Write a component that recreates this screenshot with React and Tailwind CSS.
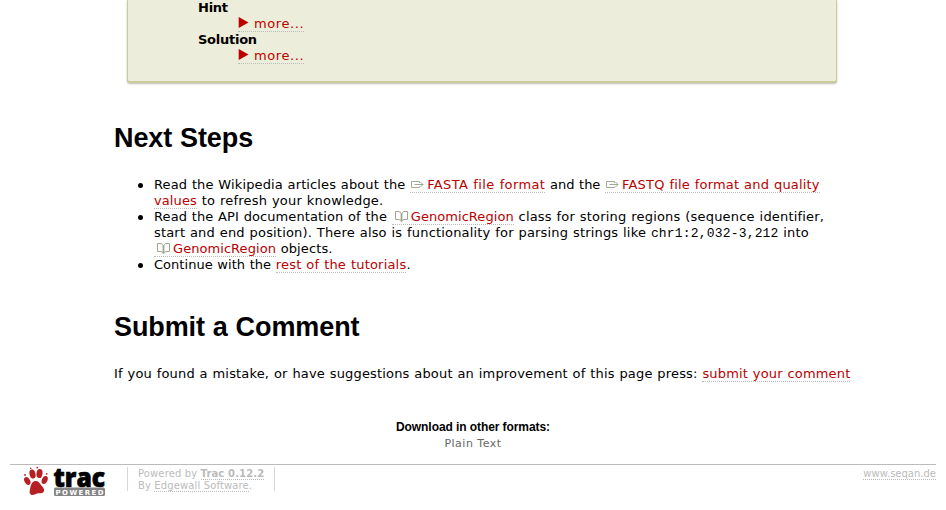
import React from "react";

const link = "text-[#bb0000] border-b border-dotted border-[#bbbbbb]";

function ExternalIcon() {
  return (
    <svg className="mr-[3px] ml-[1px] inline-block h-[10px] w-[13px] align-[-1px]" viewBox="0 0 13 10" fill="none" stroke="#a0aa93" strokeWidth="1">
      <path d="M8.500 3V1.500H.5v6h8V6.500M3.500 4.500H12M9.500 2l2.500 2.500L9.500 7" />
    </svg>
  );
}

function BookIcon() {
  return (
    <svg className="mr-[3px] ml-[3px] inline-block h-[11px] w-[13px] align-[-1px]" viewBox="0 0 13 11" fill="none" stroke="#a3a58d" strokeWidth="1">
      <path d="M6.500 3C6 1.200 4.500.5 3 .5H.5v8H3C4.500 8.500 6 9 6.500 10.500M6.500 3C7 1.200 8.500.5 10 .5h2.500v8H10C8.500 8.500 7 9 6.500 10.500" />
      <path d="M6.500 2.500v8" strokeWidth="1.800" />
    </svg>
  );
}

function More() {
  return (
    <div className="ml-10 h-4 whitespace-nowrap">
      <a className={link + " tracking-[0.6px]"}>
        <svg className="mr-[5px] inline-block h-[11px] w-[11px] align-[0px]" viewBox="0 0 11 11">
          <path d="M.7 0L10.500 5.500.7 11z" fill="#bb0000" />
        </svg>
        more...
      </a>
    </div>
  );
}

function Bullet({ children }) {
  return (
    <li className="flex">
      <span className="mt-[6px] mr-[10px] h-[5px] w-[5px] shrink-0 rounded-full bg-black" />
      <div>{children}</div>
    </li>
  );
}

function TracLogo() {
  return (
    <svg className="h-[32px] w-[84px] overflow-visible" viewBox="0 0 84 32">
      <g fill="#b42024">
        <ellipse cx="8.500" cy="7" rx="3" ry="4.600" transform="rotate(-12 8.500 7)" />
        <ellipse cx="15.500" cy="6.500" rx="3" ry="4.600" transform="rotate(8 15.500 6.500)" />
        <ellipse cx="3.300" cy="14" rx="2.800" ry="4.200" transform="rotate(-28 3.300 14)" />
        <ellipse cx="20.700" cy="13" rx="2.800" ry="4.200" transform="rotate(22 20.700 13)" />
        <path d="M11.500 14c3 0 4 2 5.500 4 1.800 2.200 3.600 3.500 3 6-.6 2.700-3.500 2-6 2.300-2.500.3-4.300 2.500-6.800 1.500-2.300-1-1.500-3.800-1-6.300.5-3 1.800-7.500 5.300-7.500z" />
        <circle cx="6.700" cy="1.200" r=".8" /><circle cx="13.300" cy=".6" r=".9" /><circle cx="1" cy="8" r=".9" /><circle cx="22.700" cy="6.800" r=".9" />
      </g>
      <text x="29.500" y="20" fontFamily="Open Sans, sans-serif" fontWeight="800" fontSize="26" textLength="51.500" lengthAdjust="spacingAndGlyphs" fill="#000" stroke="#000" strokeWidth=".7">trac</text>
      <rect x="30" y="20.500" width="51" height="8.500" rx="1.500" fill="#858585" />
      <text x="31.500" y="27.500" fontFamily="DejaVu Sans, sans-serif" fontWeight="700" fontSize="7" textLength="48" fill="#fff">POWERED</text>
    </svg>
  );
}

export default function App() {
  return (
    <div className="h-[510px] w-[946px] overflow-hidden bg-white font-['DejaVu_Sans',sans-serif] text-[13px] leading-4 text-black">
      <div className="ml-[127px] h-[83px] w-[710px] rounded-b-[3px] border-x border-b-2 border-[#cccc99] bg-[#ededdb] pl-[70px] shadow-[0_1px_2px_#bbbbbb]">
        <div className="h-4 text-[13px] font-bold tracking-[-0.25px]">Hint</div>
        <More />
        <div className="h-4 text-[13px] font-bold tracking-[-0.25px]">Solution</div>
        <More />
      </div>

      <div className="pl-[114px] whitespace-nowrap [word-spacing:0.5px]">
        <h1 className="mt-[39px] h-8 font-['Liberation_Sans',sans-serif] text-[27px] leading-8 font-bold tracking-[-0.1px]">Next Steps</h1>
        <ul className="mt-[23px] ml-[24px]">
          <Bullet>
            <div className="ml-px h-4"><span className="tracking-[0.12px]">Read the Wikipedia articles about the </span><a className={link + " tracking-[0.38px]"}><ExternalIcon />FASTA file format</a> and the <a className={link + " tracking-[0.19px]"}><ExternalIcon />FASTQ file format and quality</a></div>
            <div className="ml-px h-4"><a className={link + " tracking-[0.1px]"}>values</a><span className="tracking-[0.2px]"> to refresh your knowledge.</span></div>
          </Bullet>
          <Bullet>
            <div className="ml-px h-4"><span className="tracking-[0.09px]">Read the API documentation of the </span><a className={link + " tracking-[0.06px]"}><BookIcon />GenomicRegion</a><span className="tracking-[0.19px]"> class for storing regions (sequence identifier,</span></div>
            <div className="ml-px h-4"><span className="tracking-[0.175px]">start and end position). There also is functionality for parsing strings like </span><code className="font-['Liberation_Mono',monospace] text-[13px] tracking-[0.18px]">chr1:2,032-3,212</code><span className="tracking-[0.15px]"> into</span></div>
            <div className="ml-px h-4"><a className={link + " tracking-[0.06px]"}><BookIcon />GenomicRegion</a><span className="tracking-[0.1px]"> objects.</span></div>
          </Bullet>
          <Bullet>
            <div className="ml-px h-4"><span className="tracking-[0.03px]">Continue with the </span><a className={link + " tracking-[0.2px]"}>rest of the tutorials</a>.</div>
          </Bullet>
        </ul>
        <h1 className="mt-[38px] h-8 font-['Liberation_Sans',sans-serif] text-[27px] leading-8 font-bold tracking-[-0.1px]">Submit a Comment</h1>
        <p className="mt-[23px] h-4 tracking-[0.165px]">If you found a mistake, or have suggestions about an improvement of this page press: <a className={link}>submit your comment</a></p>
      </div>

      <div className="mt-[37px] text-center">
        <h3 className="h-4 font-['Liberation_Sans',sans-serif] text-[12px] font-bold tracking-[-0.08px]">Download in other formats:</h3>
        <div className="h-4 pt-px text-[11px] tracking-[0.5px] text-[#666666]">Plain Text</div>
      </div>

      <footer className="mt-[13px] mr-[10px] ml-[10px] flex border-t border-[#bbbbbb] text-[10px] leading-3 whitespace-nowrap text-[#bbbbbb]">
        <div className="pt-[2px] pl-[14px]"><TracLogo /></div>
        <div className="mt-[2px] ml-[19px] h-6 w-[148px] border-x border-[#d7d7d7] pl-[10px] tracking-[0.13px]">
          <div className="h-3 pt-px">Powered by <a className="border-b border-dotted border-[#bbbbbb] font-bold">Trac 0.12.2</a></div>
          <div className="h-3 pt-px">By <a className="border-b border-dotted border-[#bbbbbb]">Edgewall Software</a>.</div>
        </div>
        <div className="mt-[3px] ml-auto"><a className="border-b border-dotted border-[#bbbbbb]">www.seqan.de</a></div>
      </footer>
    </div>
  );
}
